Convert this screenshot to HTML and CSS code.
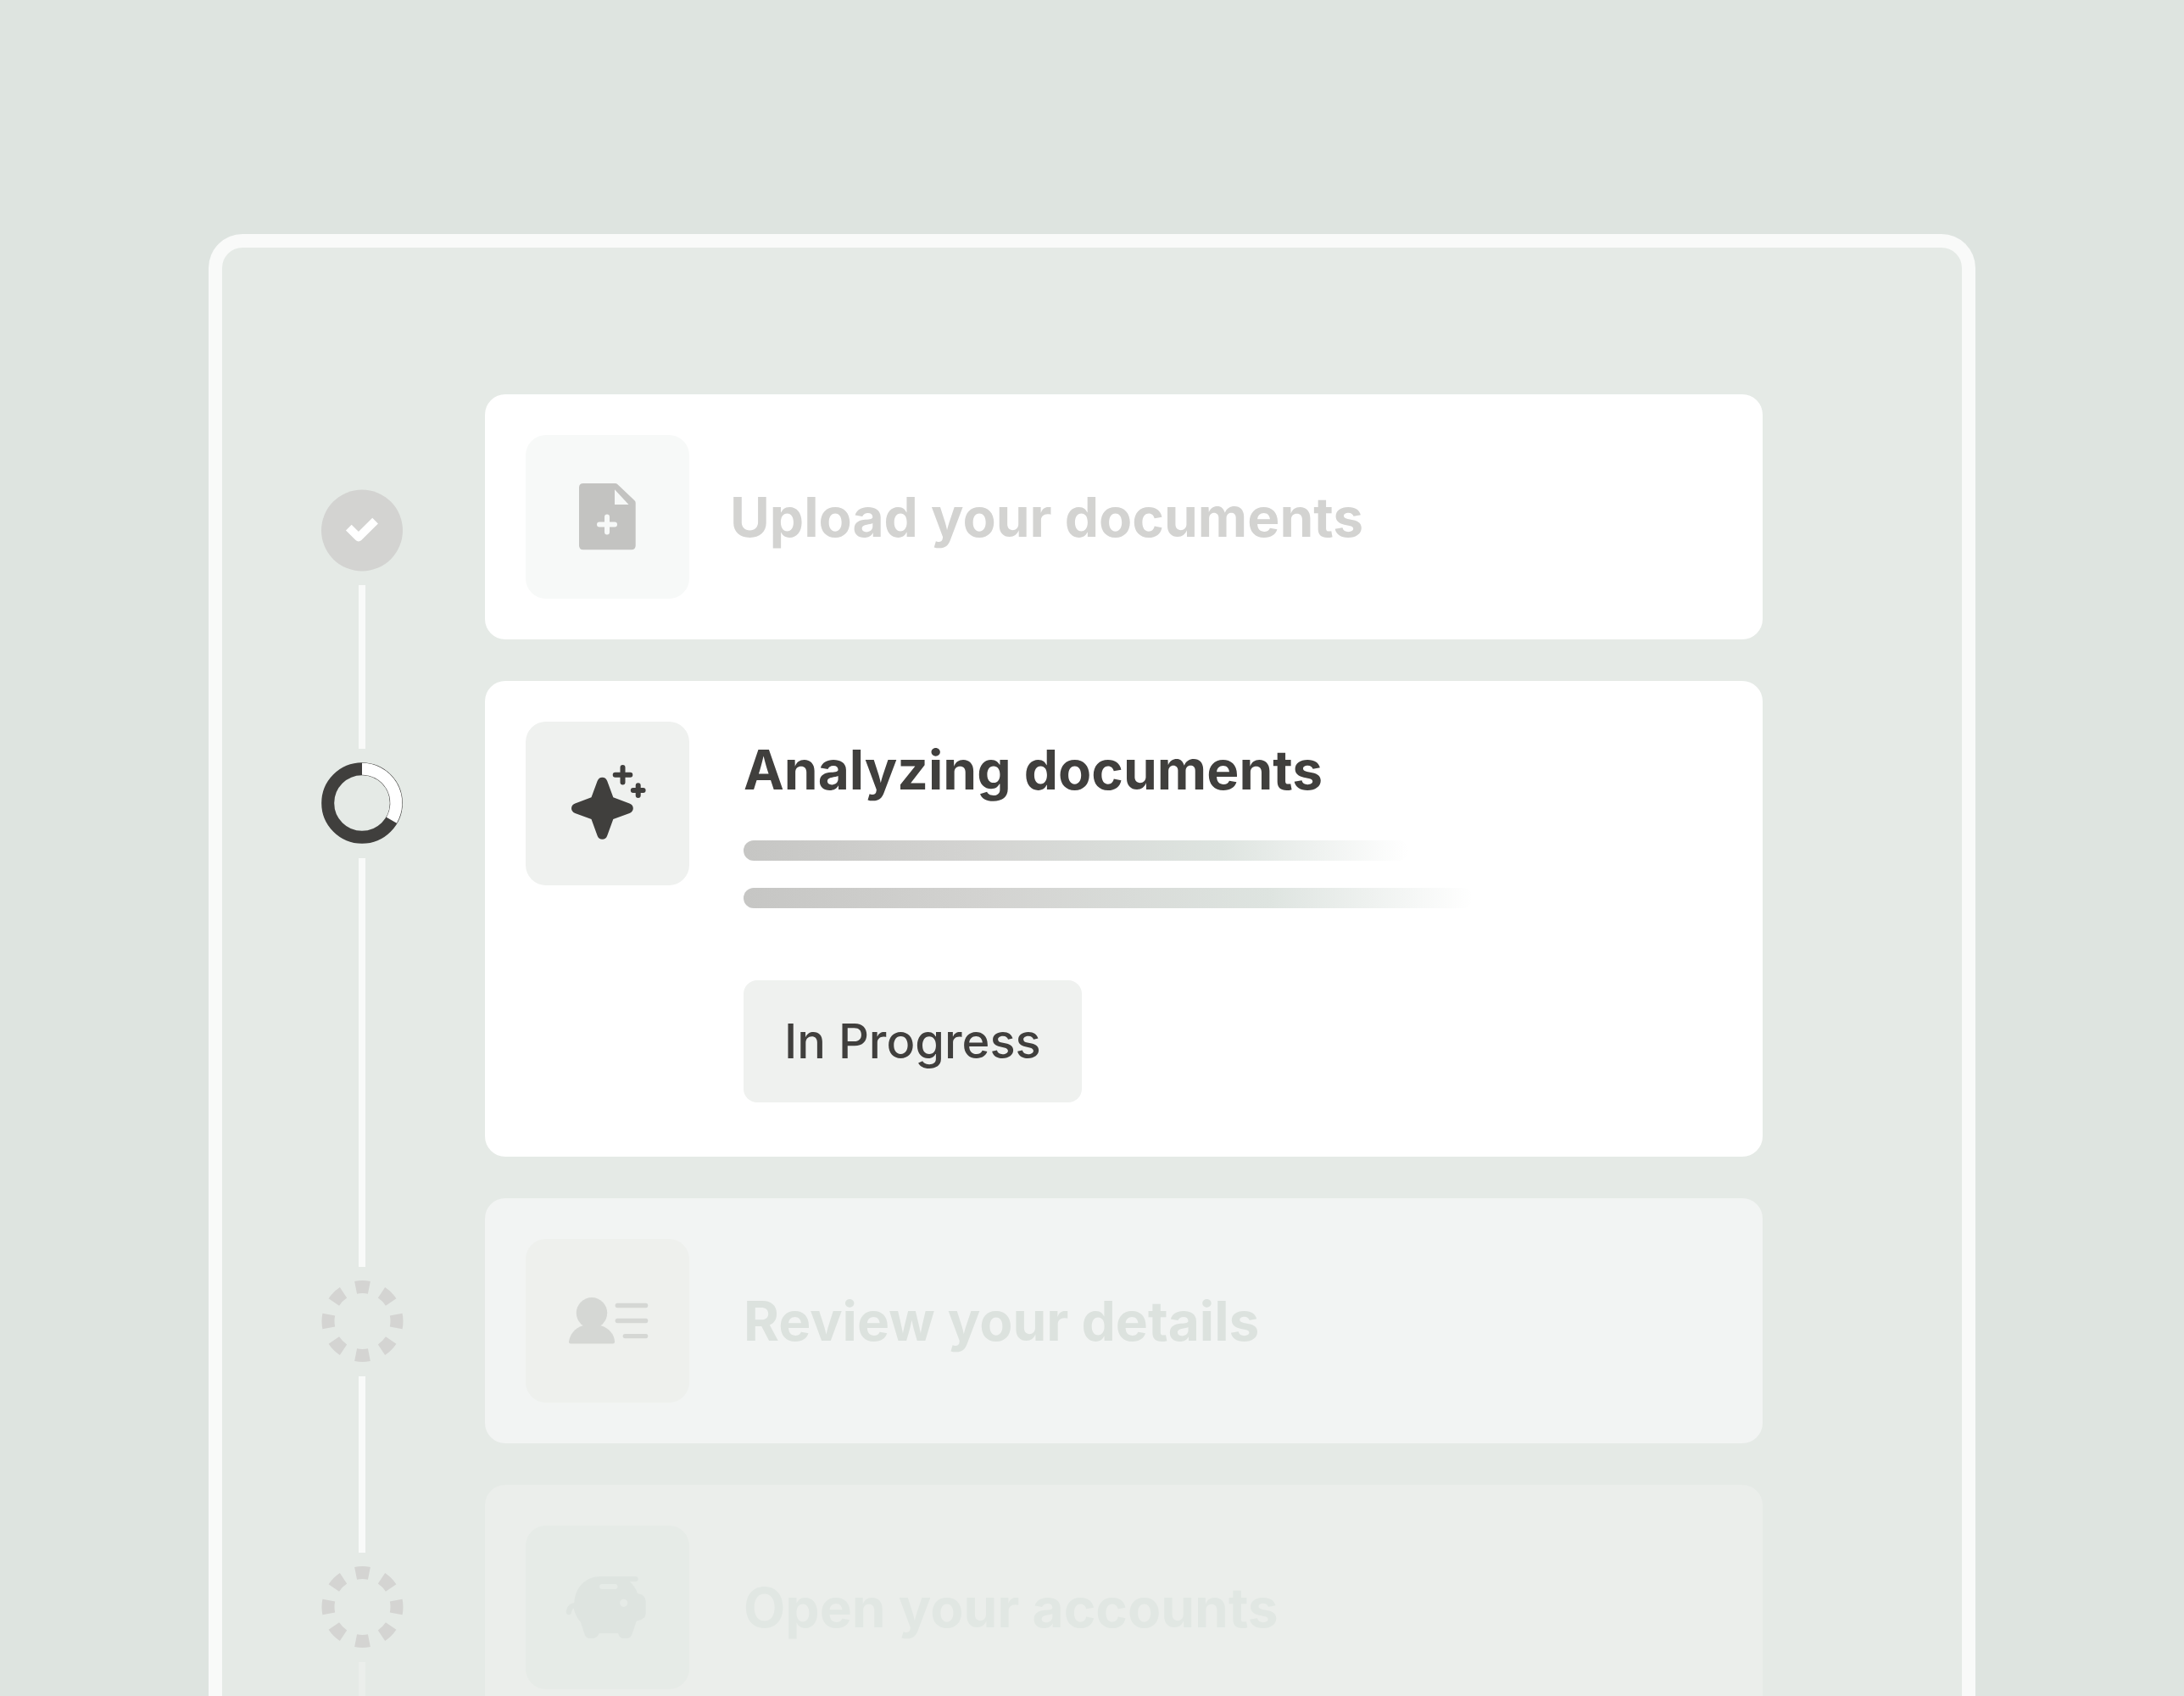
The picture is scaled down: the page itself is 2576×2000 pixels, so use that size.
FILE: index.html
```html
<!DOCTYPE html>
<html lang="en">
<head>
    <meta charset="utf-8">
    <meta name="viewport" content="width=device-width, initial-scale=1.0">
    <title>Onboarding steps</title>
    <link rel="stylesheet" href="styles.css">
</head>
<body>
    <main class="panel">
        <!-- progress rail -->
        <div class="rail">
            <svg class="marker" viewBox="0 0 97 97">
                <circle cx="48" cy="48.500" r="48" fill="#d3d3d1"/>
                <path d="M32.300 45.200 43.900 56.600 63.600 37.200" fill="none" stroke="#fff" stroke-width="9.600" stroke-linejoin="round"/>
            </svg>
            <div class="line line-short"></div>
            <svg class="marker" viewBox="0 0 97 97">
                <circle cx="48" cy="48" r="40.300" fill="none" stroke="#403f3d" stroke-width="15"/>
                <path d="M48 7.700A40.300 40.300 0 0 1 82.900 68.150" fill="none" stroke="#fff" stroke-width="14"/>
            </svg>
            <div class="line line-long"></div>
            <svg class="marker" viewBox="0 0 97 97">
                <circle class="dashes" cx="48.500" cy="48" r="40.500" pathLength="80"/>
            </svg>
            <div class="line line-medium"></div>
            <svg class="marker" viewBox="0 0 97 97">
                <circle class="dashes" cx="48.500" cy="48" r="40.500" pathLength="80"/>
            </svg>
            <div class="line line-faded"></div>
        </div>

        <div class="steps">
            <section class="card card-done">
                <div class="tile">
                    <svg viewBox="0 0 193 193">
                        <path fill="#c3c3c1" fill-rule="evenodd" d="M68 57H105.500Q107.200 57 108.500 58.200L128.500 77.200Q129.700 78.500 129.700 80V130.300Q129.700 135.300 124.700 135.300H68Q63 135.300 63 130.300V62Q63 57 68 57ZM105 64.300V82H121.500Z"/>
                        <path d="M96 96.500V114.500M87 105.400H105" stroke="#f7f9f8" stroke-width="6" stroke-linecap="round"/>
                    </svg>
                </div>
                <h2>Upload your documents</h2>
            </section>

            <section class="card card-active">
                <div class="tile">
                    <svg viewBox="0 0 193 193">
                        <path fill="#403f3d" d="M84.600 70Q86.300 65.700 90.400 65.700Q94.600 65.700 96.200 70L103.300 89.300L122.500 96.500Q126.800 98.400 126.800 102.200Q126.800 106 122.500 107.900L103.300 115.100L96.200 134.400Q94.600 138.700 90.400 138.700Q86.300 138.700 84.600 134.400L77.500 115.100L58.300 107.900Q54 106 54 102.200Q54 98.400 58.300 96.500L77.500 89.300Z"/>
                        <path d="M114.500 54V71.600M105.700 62.800H123.300M132.700 75.200V87M126.800 81.100H138.600" stroke="#403f3d" stroke-width="6" stroke-linecap="round"/>
                    </svg>
                </div>
                <div class="card-body">
                    <h2>Analyzing documents</h2>
                    <div class="bars">
                        <div class="bar bar-first"></div>
                        <div class="bar bar-second"></div>
                    </div>
                    <span class="badge">In Progress</span>
                </div>
            </section>

            <section class="card card-next">
                <div class="tile">
                    <svg viewBox="0 0 193 193">
                        <circle cx="78" cy="87.300" r="18.200" fill="#d5d7d4"/>
                        <path fill="#d5d7d4" d="M67.300 102.300H89C98 105 105 113 105 121.500Q105 123.500 103 123.500H53Q51 123.500 51 121.500C52 113 58 105 67.300 102.300Z"/>
                        <path d="M108.300 78.500H141.700M108.300 96.500H141.700M117.300 114.600H141.700" stroke="#d5d7d4" stroke-width="5.400" stroke-linecap="round"/>
                    </svg>
                </div>
                <h2>Review your details</h2>
            </section>

            <section class="card card-later">
                <div class="tile">
                    <svg viewBox="0 0 193 193">
                        <path fill="#dee4e0" fill-rule="evenodd" d="M88.300 60H129.500Q132.700 60 132.700 63Q132.700 66 129.500 66H122.700Q129 71.500 132 80Q141.700 81.500 141.700 90V103Q141.700 111 130.700 112.700L125.500 128Q124 133 119 133H115Q111 133 109 127H86.700Q84 133 79 133H75.500Q71 133 69.500 128L65 114.300C61 109 58 104 56.700 97.700Q54.700 98.500 54 102.500Q53.500 105.300 50.800 105.300Q47.700 105 47.700 101.500Q48.500 92.500 57.300 91C58.500 72.500 71 60 88.300 60ZM90 69Q87 69 87 72Q87 75 90 75H105.500Q108.500 75 108.500 72Q108.500 69 105.500 69ZM115.700 86.700A4.600 4.600 0 1 0 115.700 95.900A4.600 4.600 0 1 0 115.700 86.700Z"/>
                    </svg>
                </div>
                <h2>Open your accounts</h2>
            </section>
        </div>
    </main>
</body>
</html>
```
FILE: styles.css
```css
* {
    margin: 0;
    padding: 0;
    box-sizing: border-box;
}

body {
    display: flex;
    height: 100vh;
    padding: 276px 246px 0;
    overflow: hidden;
    background: #dee4e0;
    color: #403f3d;
    font-family: Inter, "Liberation Sans", sans-serif;
}

.panel {
    flex: 1;
    display: flex;
    gap: 96px;
    padding: 173px 235px 0 117px;
    border: 16px solid #f9faf9;
    border-bottom: none;
    border-radius: 40px 40px 0 0;
    background: #e5eae6;
    overflow: hidden;
}

/* rail */
.rail {
    flex: none;
    display: flex;
    flex-direction: column;
    gap: 16px;
    width: 97px;
    padding-top: 112px;
}

.marker {
    flex: none;
    display: block;
    width: 97px;
    height: 97px;
}

.dashes {
    fill: none;
    stroke: #d4d4d2;
    stroke-width: 15;
    stroke-dasharray: 5 5;
    stroke-dashoffset: 2.5;
}

.line {
    flex: none;
    width: 8px;
    margin-left: 44px;
    background: #f9faf9;
}

.line-short {
    height: 193px;
}

.line-long {
    height: 482px;
}

.line-medium {
    height: 208px;
}

.line-faded {
    height: 193px;
    background: #ebeeeb;
}

/* cards */
.steps {
    flex: 1;
    display: flex;
    flex-direction: column;
    gap: 49px;
}

.card {
    flex: none;
    display: flex;
    align-items: center;
    gap: 64px;
    padding: 48px;
    border-radius: 24px;
    background: #fff;
}

.tile {
    flex: none;
    width: 193px;
    height: 193px;
    border-radius: 24px;
}

.tile svg {
    display: block;
}

h2 {
    font-size: 64px;
    line-height: 80px;
    font-weight: 700;
}

.card-done {
    gap: 48px;
    color: #d3d3d1;
}

.card-done .tile {
    background: #f7f9f8;
}

.card-active {
    align-items: flex-start;
    padding-bottom: 64px;
}

.card-active .tile {
    background: #eff1ef;
}

.card-body {
    flex: 1;
    padding-top: 17px;
}

.card-next {
    background: #f2f4f3;
    color: #dce2de;
}

.card-next .tile {
    background: #eef0ed;
}

.card-later {
    background: #ebeeeb;
    color: #e1e7e3;
}

.card-later .tile {
    background: #e6ebe7;
}

.bars {
    display: flex;
    flex-direction: column;
    gap: 32px;
    margin: 43px 0 85px;
}

.bar {
    height: 24px;
    border-radius: 12px;
    background: linear-gradient(90deg, #c6c6c4 0%, #d3d3d1 34%, #dee4e0 72%, #fff 100%);
}

.bar-first {
    width: 784px;
}

.bar-second {
    width: 860px;
}

.badge {
    display: inline-block;
    padding: 40px 48px;
    border-radius: 16px;
    background: #eff1ef;
    font-size: 56px;
    line-height: 64px;
    font-weight: 500;
}
```
